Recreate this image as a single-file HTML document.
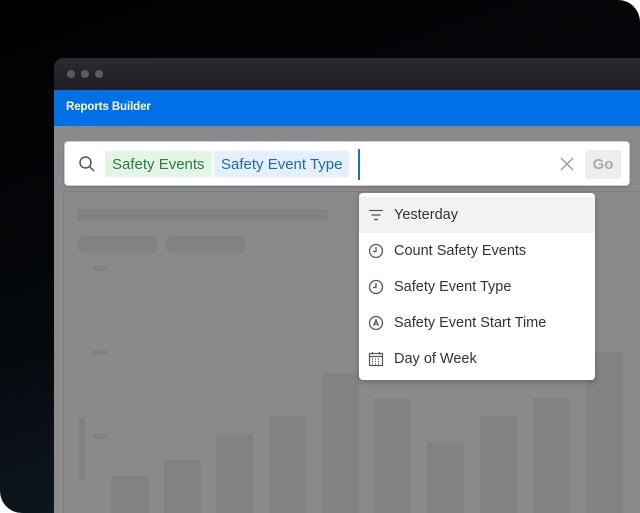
<!DOCTYPE html>
<html><head><meta charset="utf-8"><style>
*{margin:0;padding:0;box-sizing:border-box}
html,body{width:640px;height:513px;background:#fff;overflow:hidden;font-family:"Liberation Sans",sans-serif}
.card{position:absolute;left:0;top:0;width:640px;height:513px;border-radius:0 22px 0 22px;overflow:hidden;background:linear-gradient(160deg,#000 0%,#05080c 45%,#16242f 100%)}
.win{position:absolute;left:54px;top:58px;width:586px;height:455px;border-radius:10px 0 0 0;overflow:hidden;background:#8a8a8a}
.tb{height:32px;background:linear-gradient(#2b2b2f,#1f1f23);position:relative}
.dot{position:absolute;top:12px;width:8px;height:8px;border-radius:50%;background:#5b5b5f}
.blue{height:36px;background:#0070e6;color:#fff;font-size:11.5px;font-weight:bold;padding:11px 0 0 12px;letter-spacing:-0.1px}
.panel{position:absolute;left:9px;top:133px;width:580px;height:322px;border:1px solid #7e7e7e;border-bottom:none;border-radius:3px 3px 0 0;background:#8a8a8a;overflow:hidden}
.r{position:absolute;background:#828282}
.search{position:absolute;left:10px;top:83px;width:566px;height:45px;background:#fff;border-radius:4px;border:1px solid #c9c9e8;box-shadow:0 1px 2px rgba(0,0,0,.2)}
.chip{position:absolute;top:9px;height:26px;font-size:15px;line-height:27px;padding:0 7px;border-radius:2px}
.menu{position:absolute;left:305px;top:135px;width:236px;height:187px;background:#fff;border-radius:4px;box-shadow:0 2px 6px rgba(0,0,0,.25)}
.it{position:absolute;left:0;width:236px;height:36px;font-size:14.5px;color:#333;line-height:37px;padding-left:35px}
.it svg{position:absolute;left:9px;top:10px}
</style></head><body>
<div class="card">
<div class="win">
 <div class="tb"><div class="dot" style="left:13px"></div><div class="dot" style="left:27px"></div><div class="dot" style="left:41px"></div></div>
 <div class="blue">Reports Builder</div>
 <div class="panel">
  <div class="r" style="left:13px;top:17px;width:251px;height:12px;border-radius:2px"></div>
  <div class="r" style="left:13px;top:44px;width:81px;height:18px;border-radius:9px"></div>
  <div class="r" style="left:101px;top:44px;width:81px;height:18px;border-radius:9px"></div>
  <div class="r" style="left:29px;top:74px;width:15px;height:5px"></div>
  <div class="r" style="left:29px;top:158px;width:15px;height:5px"></div>
  <div class="r" style="left:29px;top:242px;width:15px;height:5px"></div>
  <div class="r" style="left:15px;top:226px;width:6px;height:62px"></div>
  <div class="r" style="left:47px;top:284px;width:38px;height:38px"></div>
  <div class="r" style="left:100px;top:268px;width:37px;height:54px"></div>
  <div class="r" style="left:152px;top:242px;width:37px;height:80px"></div>
  <div class="r" style="left:205px;top:224px;width:37px;height:98px"></div>
  <div class="r" style="left:258px;top:181px;width:37px;height:141px"></div>
  <div class="r" style="left:310px;top:207px;width:37px;height:115px"></div>
  <div class="r" style="left:363px;top:250px;width:37px;height:72px"></div>
  <div class="r" style="left:416px;top:224px;width:37px;height:98px"></div>
  <div class="r" style="left:469px;top:206px;width:37px;height:116px"></div>
  <div class="r" style="left:522px;top:160px;width:37px;height:162px"></div>
 </div>
 <div class="search">
  <svg style="position:absolute;left:13px;top:13px" width="18" height="18" viewBox="0 0 18 18" fill="none" stroke="#555" stroke-width="1.5"><circle cx="7.5" cy="7.5" r="5.5"/><path d="M11.5 11.5L16 16"/></svg>
  <div class="chip" style="left:40px;background:#e3f5e6;color:#2e7d3c">Safety Events</div>
  <div class="chip" style="left:149px;background:#e4f1fc;color:#1f66b8">Safety Event Type</div>
  <div style="position:absolute;left:293px;top:7px;width:2px;height:31px;background:#1a6fd0"></div>
  <svg style="position:absolute;left:495px;top:15px" width="14" height="14" viewBox="0 0 14 14" stroke="#999" stroke-width="1.3"><path d="M1 1L13 13M13 1L1 13"/></svg>
  <div style="position:absolute;left:520px;top:8px;width:36px;height:29px;background:#eee;border-radius:2px;color:#aaa;font-size:15px;font-weight:bold;text-align:center;line-height:29px">Go</div>
 </div>
 <div class="menu">
  <div class="it" style="top:4px;background:#f2f2f2"><svg width="16" height="16" viewBox="0 0 16 16" stroke="#555" stroke-width="1.3"><path d="M1 3.5H15M3.5 8H12.5M6 12.5H10"/></svg>Yesterday</div>
  <div class="it" style="top:40px"><svg width="16" height="16" viewBox="0 0 16 16" fill="none" stroke="#555" stroke-width="1.3"><circle cx="8" cy="8" r="6.5"/><path d="M8 4V8.5H5"/></svg>Count Safety Events</div>
  <div class="it" style="top:76px"><svg width="16" height="16" viewBox="0 0 16 16" fill="none" stroke="#555" stroke-width="1.3"><circle cx="8" cy="8" r="6.5"/><path d="M8 4V8.5H5"/></svg>Safety Event Type</div>
  <div class="it" style="top:112px"><svg width="16" height="16" viewBox="0 0 16 16" fill="none" stroke="#555" stroke-width="1.3"><circle cx="8" cy="8" r="6.5"/><path d="M5.5 11L8 4.8L10.5 11M6.4 9H9.6"/></svg>Safety Event Start Time</div>
  <div class="it" style="top:148px"><svg width="16" height="16" viewBox="0 0 16 16" fill="none" stroke="#555" stroke-width="1.2"><rect x="1.5" y="2.5" width="13" height="12"/><path d="M1.5 5.5H14.5M4.5 1V3.5M11.5 1V3.5"/><path d="M4 8h1M7 8h1M10 8h1M4 10.5h1M7 10.5h1M10 10.5h1M4 13h1M7 13h1M10 13h1" stroke-width="1.2"/></svg>Day of Week</div>
 </div>
</div>
</div>
</body></html>
